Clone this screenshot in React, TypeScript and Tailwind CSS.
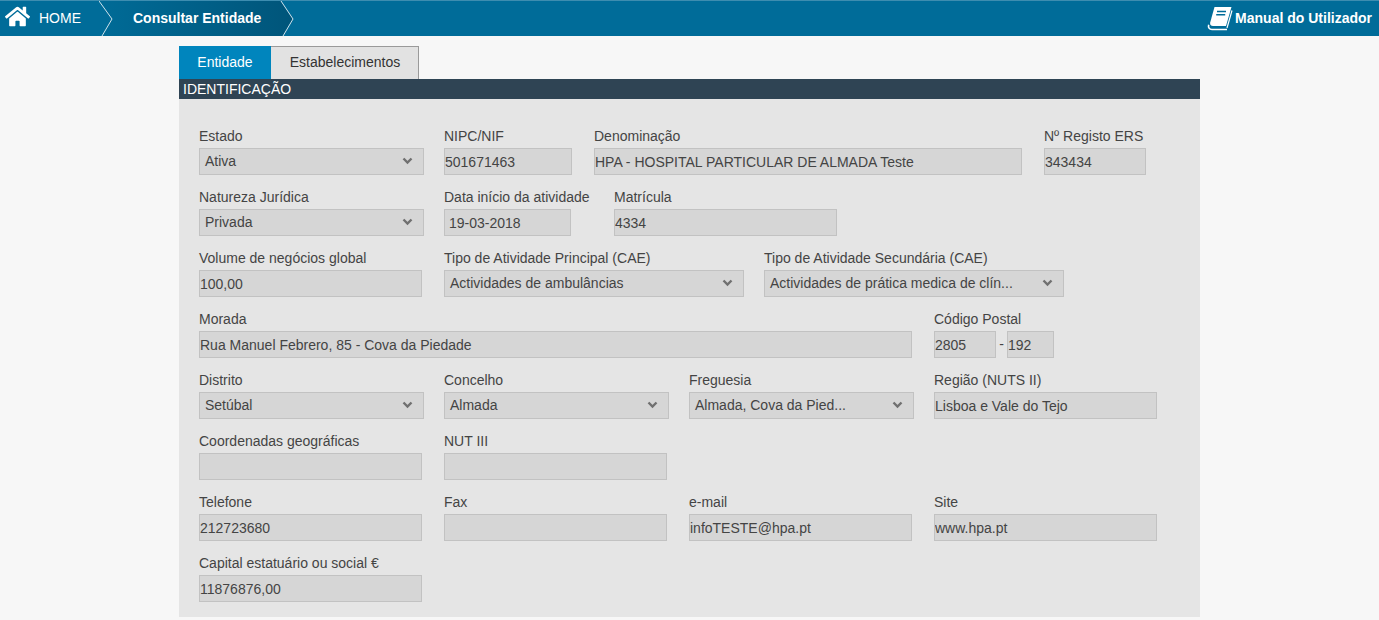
import { FaHome } from 'react-icons/fa';

const boxClass = 'h-[27px] w-full border border-[#c2c2c2] bg-[#d6d6d6] text-[14px] text-[#444] whitespace-nowrap overflow-hidden';

function Label({ text }: { text: string }) {
  return <div className="h-5 text-[14px] leading-4 text-[#444] whitespace-nowrap">{text}</div>;
}

function Input({ label, value, className, pad = 'pl-0' }: { label: string; value?: string; className: string; pad?: string }) {
  return (
    <div className={className}>
      <Label text={label} />
      <div className={`${boxClass} leading-[27px] ${pad}`}>{value}</div>
    </div>
  );
}

function Select({ label, value, className }: { label: string; value: string; className: string }) {
  return (
    <div className={className}>
      <Label text={label} />
      <div className={`${boxClass} flex items-center justify-between pl-[5px] pr-[10px]`}>
        <span>{value}</span>
        <svg width="11" height="8" viewBox="0 0 11 8" className="mb-[2px]">
          <polyline points="1.500,1.500 5.500,5.500 9.500,1.500" fill="none" stroke="#707070" strokeWidth="2.400" />
        </svg>
      </div>
    </div>
  );
}

function Row({ children }: { children: React.ReactNode }) {
  return <div className="flex h-[47px] mb-[14px]">{children}</div>;
}

export default function App() {
  return (
    <div className="min-h-[620px] bg-[#f7f7f7] font-['Liberation_Sans',Arial,sans-serif]">
      {/* Top bar */}
      <div className="h-9 bg-[#006c99] border-t border-[#3d8db0] flex items-center text-white text-[14px]">
        <FaHome size={25} className="ml-[5px] mb-1" />
        <span className="ml-[9px] w-[60px]">HOME</span>
        <div className="h-[35px] w-[195px] flex items-center">
          <svg width="195" height="35" viewBox="0 0 195 35" className="shrink-0">
            <defs>
              <linearGradient id="crumb" x1="0" x2="1" y1="0" y2="0">
                <stop offset="0" stopColor="#006b97" />
                <stop offset="1" stopColor="#00557a" />
              </linearGradient>
            </defs>
            <polygon points="0,0 182,0 194,18 184,35 3,35 13,18" fill="url(#crumb)" />
            <polyline points="0,0 13,18 3,35" fill="none" stroke="#cfe3ec" strokeWidth="1" />
            <polyline points="182,0 194,18 184,35" fill="none" stroke="#cfe3ec" strokeWidth="1" />
          </svg>
          <span className="-ml-[161px] font-bold whitespace-nowrap">Consultar Entidade</span>
        </div>
        <div className="ml-auto mr-[7px] flex items-center font-bold">
          <svg width="26" height="25" viewBox="0 0 26 25" className="mr-[2px]">
            <path d="M7.500 1h17l-5.500 19H6c-2.200 0-3.300-1.500-2.800-3.500z" fill="#fff" />
            <path d="M20 23.500H5c-2.800 0-4-2.200-3.300-4.800" fill="none" stroke="#fff" strokeWidth="1.600" />
            <path d="M25 4.500 20 22" fill="none" stroke="#fff" strokeWidth="1.200" />
            <path d="M10 5.500h9M9.200 8.800h9" stroke="#006c99" strokeWidth="1.400" />
          </svg>
          <span>Manual do Utilizador</span>
        </div>
      </div>

      <div className="ml-[179px] w-[1021px] pt-[10px]">
        {/* Tabs */}
        <div className="flex h-[33px] text-[14px]">
          <div className="w-[92px] bg-[#0085bd] text-white flex items-center justify-center pb-px">Entidade</div>
          <div className="w-[148px] bg-[#e2e2e2] border border-[#9a9a9a] border-b-0 border-l-0 text-[#333] flex items-center justify-center pb-[2px] pl-px">
            Estabelecimentos
          </div>
        </div>

        <div className="h-5 bg-[#2f4454] text-white text-[14px] leading-5 pl-1">IDENTIFICAÇÃO</div>

        {/* Form */}
        <div className="h-[518px] bg-[#e5e5e5] pl-5 pt-[29px]">
          <Row>
            <Select label="Estado" value="Ativa" className="w-[225px]" />
            <Input label="NIPC/NIF" value="501671463" className="ml-5 w-[128px]" />
            <Input label="Denominação" value="HPA - HOSPITAL PARTICULAR DE ALMADA Teste" className="ml-[22px] w-[428px]" />
            <Input label="Nº Registo ERS" value="343434" className="ml-[22px] w-[102px]" />
          </Row>
          <Row>
            <Select label="Natureza Jurídica" value="Privada" className="w-[225px]" />
            <Input label="Data início da atividade" value="19-03-2018" pad="pl-1" className="ml-5 w-[127px]" />
            <Input label="Matrícula" value="4334" className="ml-[43px] w-[223px]" />
          </Row>
          <Row>
            <Input label="Volume de negócios global" value="100,00" className="w-[223px]" />
            <Select label="Tipo de Atividade Principal (CAE)" value="Actividades de ambulâncias" className="ml-[22px] w-[300px]" />
            <Select label="Tipo de Atividade Secundária (CAE)" value="Actividades de prática medica de clín..." className="ml-5 w-[300px]" />
          </Row>
          <Row>
            <Input label="Morada" value="Rua Manuel Febrero, 85 - Cova da Piedade" className="w-[713px]" />
            <Input label="Código Postal" value="2805" className="ml-[22px] w-[62px]" />
            <span className="mt-5 w-[11px] text-center text-[14px] leading-[27px] text-[#444]">-</span>
            <Input label="" value="192" className="w-[47px]" />
          </Row>
          <Row>
            <Select label="Distrito" value="Setúbal" className="w-[225px]" />
            <Select label="Concelho" value="Almada" className="ml-5 w-[225px]" />
            <Select label="Freguesia" value="Almada, Cova da Pied..." className="ml-5 w-[225px]" />
            <Input label="Região (NUTS II)" value="Lisboa e Vale do Tejo" className="ml-5 w-[223px]" />
          </Row>
          <Row>
            <Input label="Coordenadas geográficas" className="w-[223px]" />
            <Input label="NUT III" className="ml-[22px] w-[223px]" />
          </Row>
          <Row>
            <Input label="Telefone" value="212723680" className="w-[223px]" />
            <Input label="Fax" className="ml-[22px] w-[223px]" />
            <Input label="e-mail" value="infoTESTE@hpa.pt" className="ml-[22px] w-[223px]" />
            <Input label="Site" value="www.hpa.pt" className="ml-[22px] w-[223px]" />
          </Row>
          <Row>
            <Input label="Capital estatuário ou social €" value="11876876,00" className="w-[223px]" />
          </Row>
        </div>
      </div>
    </div>
  );
}
